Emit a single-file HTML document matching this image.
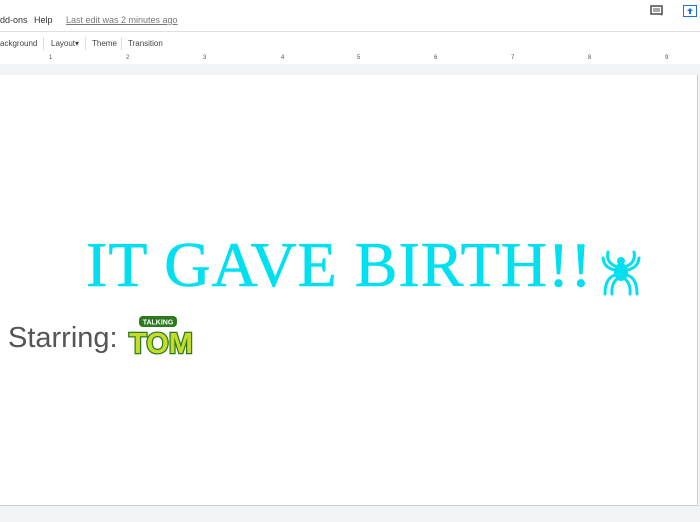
<!DOCTYPE html>
<html><head><meta charset="utf-8"><style>
body{margin:0;width:700px;height:522px;overflow:hidden;background:#f1f3f4;font-family:"Liberation Sans",sans-serif;position:relative}
.top{position:absolute;left:0;top:0;width:700px;height:31px;background:#fff}
.menu{position:absolute;top:15px;font-size:9px;color:#333}
.tb{position:absolute;left:0;top:31px;width:700px;height:23px;background:#fff;border-top:1px solid #e0e0e0;border-bottom:1px solid #e0e0e0}
.tb span{position:absolute;top:7px;font-size:8px;color:#444}
.sep{position:absolute;top:5px;width:1px;height:13px;background:#ddd}
.ruler{position:absolute;left:0;top:55px;width:700px;height:9px;background:#fff;font-size:6px;color:#555}
.ruler b{position:absolute;top:0;font-weight:normal}
.slide{position:absolute;left:0;top:75px;width:697px;height:430px;background:#fff;border-right:1px solid #ccc;border-bottom:1px solid #ccc}
.title{position:absolute;left:86px;top:228px;font-family:"Liberation Serif",serif;font-size:64px;color:#00e0f0;white-space:nowrap;letter-spacing:1px;-webkit-text-stroke:0.6px #00e0f0}
.star{position:absolute;left:8px;top:322px;font-size:29px;color:#555}
</style></head><body>
<div class="top">
<span class="menu" style="left:0">dd-ons</span>
<span class="menu" style="left:34px">Help</span>
<span class="menu" style="left:66px;color:#777;text-decoration:underline">Last edit was 2 minutes ago</span>
<svg style="position:absolute;left:650px;top:5px" width="13" height="12"><rect x="1" y="1" width="11" height="8" fill="none" stroke="#555" stroke-width="1.6"/><line x1="3" y1="4" x2="10" y2="4" stroke="#555"/><line x1="3" y1="6" x2="10" y2="6" stroke="#555"/><path d="M10 9 L12 11 L12 9Z" fill="#555"/></svg>
<svg style="position:absolute;left:683px;top:5px" width="14" height="12"><rect x="0.5" y="0.5" width="13" height="11" fill="#fff" stroke="#1a73e8"/><path d="M7 3 L10 6 L8 6 L8 9 L6 9 L6 6 L4 6Z" fill="#1a73e8"/></svg>
</div>
<div class="tb">
<span style="left:0">ackground</span><div class="sep" style="left:43px"></div>
<span style="left:51px">Layout▾</span><div class="sep" style="left:85px"></div>
<span style="left:92px">Theme</span><div class="sep" style="left:121px"></div>
<span style="left:128px">Transition</span>
</div>
<div class="ruler"><b style="left:49px">1</b><b style="left:126px">2</b><b style="left:203px">3</b><b style="left:281px">4</b><b style="left:357px">5</b><b style="left:434px">6</b><b style="left:511px">7</b><b style="left:588px">8</b><b style="left:665px">9</b></div>
<div class="slide"></div>
<div class="title">IT GAVE BIRTH!!</div>
<svg style="position:absolute;left:600px;top:250px" width="42" height="46" viewBox="0 0 42 46" fill="none" stroke="#00e0f0" stroke-width="3" stroke-linecap="round">
<ellipse cx="21" cy="22" rx="7" ry="9" fill="#00e0f0" stroke="none"/><circle cx="21" cy="11" r="4" fill="#00e0f0" stroke="none"/>
<path d="M15 16 Q6 12 8 2"/><path d="M27 16 Q36 12 34 2"/><path d="M15 20 Q4 18 3 8"/><path d="M27 20 Q38 18 39 8"/>
<path d="M15 25 Q5 28 5 44"/><path d="M27 25 Q37 28 37 44"/><path d="M17 29 Q11 34 12 44"/><path d="M25 29 Q31 34 30 44"/>
</svg>
<div class="star">Starring:</div>
<svg style="position:absolute;left:127px;top:316px" width="68" height="40" viewBox="0 0 68 40">
<rect x="12" y="0" width="38" height="11" rx="4" fill="#2d7a1e"/>
<text x="31" y="8.5" font-size="7" font-weight="bold" fill="#fff" text-anchor="middle" font-family="Liberation Sans">TALKING</text>
<text x="34" y="37" font-size="29" font-weight="bold" fill="#c6dc2a" stroke="#2d7a1e" stroke-width="2.5" paint-order="stroke" text-anchor="middle" font-family="Liberation Sans">TOM</text>
</svg>
</body></html>
